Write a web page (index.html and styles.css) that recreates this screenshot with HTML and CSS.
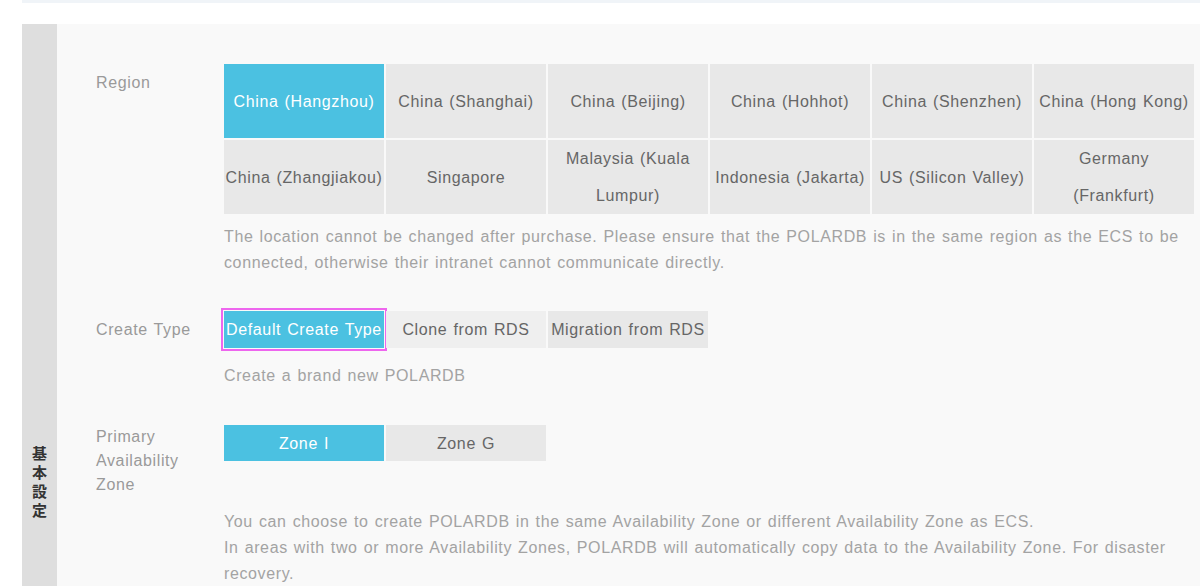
FILE: index.html
```html
<!DOCTYPE html>
<html lang="en">
<head>
<meta charset="utf-8">
<title>POLARDB</title>
<link rel="stylesheet" href="styles.css">
</head>
<body>
<div class="top-strip"></div>
<div class="panel">
  <div class="side"><span class="side-text">基本設定</span></div>
  <div class="content">
    <div class="section">
      <div class="label label-tall">Region</div>
      <div class="field">
        <div class="region-grid">
          <div class="cell active">China (Hangzhou)</div>
          <div class="cell">China (Shanghai)</div>
          <div class="cell">China (Beijing)</div>
          <div class="cell">China (Hohhot)</div>
          <div class="cell">China (Shenzhen)</div>
          <div class="cell">China (Hong Kong)</div>
          <div class="cell">China (Zhangjiakou)</div>
          <div class="cell">Singapore</div>
          <div class="cell">Malaysia (Kuala<br>Lumpur)</div>
          <div class="cell">Indonesia (Jakarta)</div>
          <div class="cell">US (Silicon Valley)</div>
          <div class="cell">Germany<br>(Frankfurt)</div>
        </div>
        <p class="desc desc-region">The location cannot be changed after purchase. Please ensure that the POLARDB is in the same region as the ECS to be connected, otherwise their intranet cannot communicate directly.</p>
      </div>
    </div>

    <div class="section section-type">
      <div class="label label-tall">Create Type</div>
      <div class="field">
        <div class="btn-row">
          <div class="btn btn-type active focused">Default Create Type</div>
          <div class="btn btn-type light">Clone from RDS</div>
          <div class="btn btn-type">Migration from RDS</div>
        </div>
        <p class="desc desc-type">Create a brand new POLARDB</p>
      </div>
    </div>

    <div class="section section-zone">
      <div class="label label-zone">Primary<br>Availability<br>Zone</div>
      <div class="field">
        <div class="btn-row">
          <div class="btn btn-zone active">Zone I</div>
          <div class="btn btn-zone">Zone G</div>
        </div>
        <p class="desc desc-zone">You can choose to create POLARDB in the same Availability Zone or different Availability Zone as ECS.<br>In areas with two or more Availability Zones, POLARDB will automatically copy data to the Availability Zone. For disaster recovery.</p>
      </div>
    </div>
  </div>
</div>
</body>
</html>
```
FILE: styles.css
```css
* { box-sizing: border-box; }
html, body {
  margin: 0;
  padding: 0;
  background: #ffffff;
  font-family: "Liberation Sans", Arial, "Noto Sans CJK JP", sans-serif;
  font-size: 16px;
  letter-spacing: 0.62px;
  word-spacing: 1px;
  overflow: hidden;
}
.top-strip {
  height: 3px;
  margin-left: 22px;
  background: #f0f4f8;
}
.panel {
  display: flex;
  margin-top: 21px;
  margin-left: 22px;
}
.side {
  width: 35px;
  flex: none;
  background: #dedede;
  display: flex;
  justify-content: center;
  padding-top: 422px;
  min-height: 700px;
}
.side-text {
  writing-mode: vertical-rl;
  font-family: "Noto Sans CJK JP", sans-serif;
  font-weight: 700;
  font-size: 15px;
  letter-spacing: 4px;
  word-spacing: 0;
  color: #333333;
  height: fit-content;
}
.content {
  flex: 1;
  background: #f9f9f9;
  padding: 40px 0 0 39px;
}
.section {
  display: flex;
}
.section-type { margin-top: 35px; }
.section-zone { margin-top: 36px; }
.label {
  width: 128px;
  flex: none;
  color: #9a9a9a;
}
.label-tall { line-height: 38px; }
.label-zone { line-height: 24px; }
.field {
  width: 970px;
  flex: none;
}
.region-grid {
  display: grid;
  grid-template-columns: repeat(6, 160px);
  grid-auto-rows: 74px;
  gap: 2px;
}
.cell, .btn {
  display: flex;
  align-items: center;
  justify-content: center;
  text-align: center;
  white-space: nowrap;
  background: #e8e8e8;
  color: #666666;
  line-height: 37px;
}
.active {
  background: #4bc1e1;
  color: #ffffff;
}
.btn-row {
  display: flex;
  gap: 2px;
}
.btn { width: 160px; }
.btn-type { height: 37px; }
.btn-zone { height: 36px; }
.light { background: #efefef; }
.focused {
  outline: 2px solid #ee66ee;
  outline-offset: 1px;
}
.desc {
  margin: 0;
  color: #a3a3a3;
  line-height: 26px;
}
.desc-region { margin-top: 10px; }
.desc-type { margin-top: 15px; }
.desc-zone { margin-top: 48px; }
```
